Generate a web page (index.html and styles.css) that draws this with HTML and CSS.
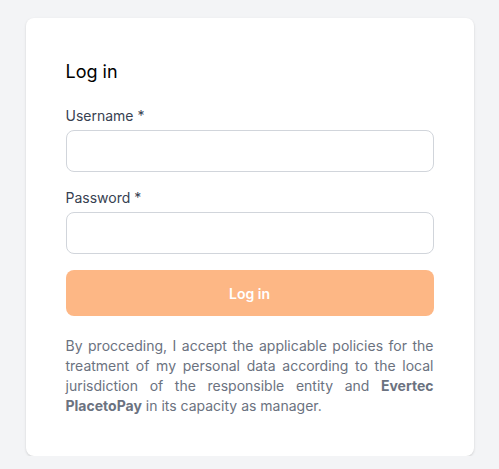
FILE: index.html
```html
<!DOCTYPE html>
<html lang="en">
<head>
<meta charset="utf-8">
<title>Log in</title>
<link rel="stylesheet" href="styles.css">
</head>
<body>
<main class="page">
  <section class="card">
    <h1 class="title">Log in</h1>
    <form class="form">
      <div class="field">
        <label class="label" for="username">Username *</label>
        <input class="input" id="username" type="text">
      </div>
      <div class="field">
        <label class="label" for="password">Password *</label>
        <input class="input" id="password" type="password">
      </div>
      <button class="button" type="button">Log in</button>
    </form>
    <p class="legal">By procceding, I accept the applicable policies for the treatment of my personal data according to the local jurisdiction of the responsible entity and <strong>Evertec PlacetoPay</strong> in its capacity as manager.</p>
  </section>
</main>
</body>
</html>
```
FILE: styles.css
```css
* { box-sizing: border-box; }
html, body { margin: 0; padding: 0; }
body {
  background: #f3f4f6;
  font-family: Inter, "Noto Sans", sans-serif;
  color: #111827;
}
.page {
  display: flex;
  justify-content: center;
  padding-top: 18px;
}
.card {
  width: 448px;
  background: #ffffff;
  border-radius: 8px;
  box-shadow: 0 1px 3px rgba(0,0,0,0.1), 0 1px 2px rgba(0,0,0,0.06);
  padding: 40px;
}
.title {
  margin: 0;
  font-size: 18px;
  line-height: 28px;
  font-weight: 400;
  color: #000000;
}
.form {
  display: flex;
  flex-direction: column;
  gap: 16px;
  margin-top: 20px;
}
.field {
  display: flex;
  flex-direction: column;
  gap: 4px;
}
.label {
  font-size: 14px;
  line-height: 20px;
  font-weight: 400;
  color: #374151;
}
.input {
  height: 42px;
  border: 1px solid #d1d5db;
  border-radius: 8px;
  background: #ffffff;
  font: inherit;
  padding: 0 12px;
}
.button {
  height: 46px;
  border: none;
  border-radius: 8px;
  background: #fdb785;
  color: #ffffff;
  font-family: inherit;
  font-size: 14px;
  font-weight: 600;
}
.legal {
  margin: 20px 0 0;
  font-size: 14px;
  line-height: 20px;
  color: #6b7280;
  text-align: justify;
}
.legal strong {
  font-weight: 700;
  color: #6b7280;
}
```
